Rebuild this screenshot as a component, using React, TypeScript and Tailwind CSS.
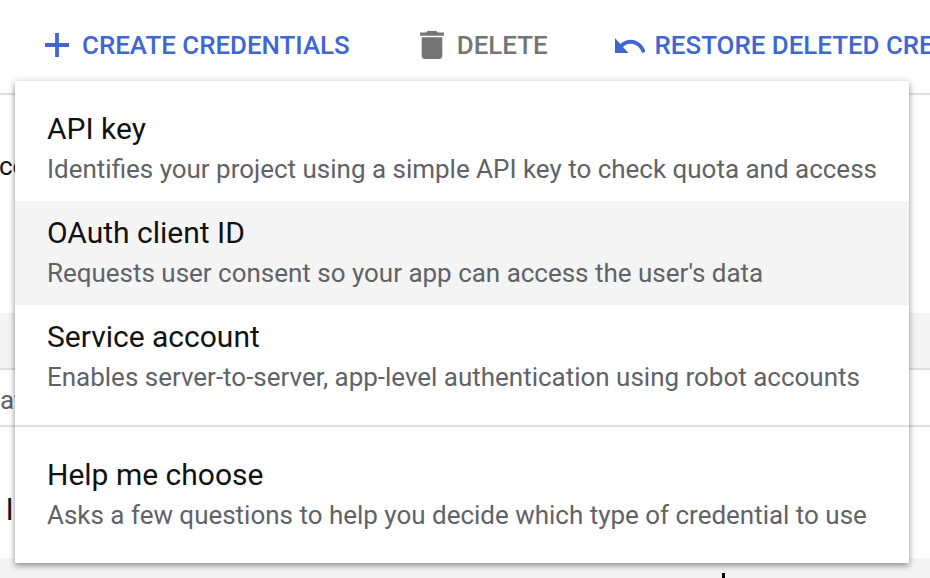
import React from "react";

function Item({ title, sub, active }: { title: string; sub: string; active?: boolean }) {
  return (
    <div className={`h-[104px] pl-[32px] pt-[16px] whitespace-nowrap ${active ? "bg-[#f4f4f4]" : ""}`}>
      <div className="text-[30px] leading-[32px] text-[#111111]">{title}</div>
      <div className="mt-[8px] text-[25.97px] leading-[32px] text-[#5f6368]">{sub}</div>
    </div>
  );
}

export default function App() {
  return (
    <div className="relative w-[930px] h-[578px] overflow-hidden bg-white font-['Roboto',sans-serif]">
      <div className="h-[95px] border-b-[2px] border-[#dfdfdf] flex items-start pt-[27px] pl-[45px] whitespace-nowrap text-[25.9px] leading-[36px] font-medium overflow-hidden">
        <div className="flex items-center text-[#3f67d3]">
          <svg width="24" height="24" viewBox="5 5 14 14" className="mr-[13px]" fill="currentColor">
            <path d="M19 13.100h-5.900V19h-2.200v-5.900H5v-2.200h5.900V5h2.200v5.900H19z" />
          </svg>
          <span>CREATE CREDENTIALS</span>
        </div>
        <div className="flex items-center text-[#757575] ml-[70px]">
          <svg width="24" height="28" viewBox="5 3 14 18" preserveAspectRatio="none" className="mr-[13px]" fill="currentColor">
            <path d="M6 19c0 1.100.9 2 2 2h8c1.100 0 2-.9 2-2V7H6v12zM19 4h-3.500l-1-1h-5l-1 1H5v2h14V4z" />
          </svg>
          <span>DELETE</span>
        </div>
        <div className="flex items-center text-[#3f67d3] ml-[67px]">
          <svg width="30" height="15" viewBox="2 7 20.100 9" preserveAspectRatio="none" className="mr-[10px]" fill="currentColor">
            <path d="M12.500 8c-2.650 0-5.050.99-6.900 2.600L2 7v9h9l-3.620-3.620c1.390-1.160 3.160-1.880 5.120-1.880 3.540 0 6.550 2.310 7.600 5.500l2.370-.78C21.080 11.030 17.150 8 12.500 8z" />
          </svg>
          <span>RESTORE DELETED CREDENTIALS</span>
        </div>
      </div>
      <div className="h-[57px] pt-[56px] text-[26px] leading-[32px] text-[#111111]">
        <span className="block -ml-[1px] -mt-[1px]">cc</span>
      </div>
      <div className="h-[161px]" />
      <div className="h-[57px] bg-[#f4f4f4] border-b-[2px] border-[#dfdfdf]" />
      <div className="h-[57px] border-b-[2px] border-[#dfdfdf] pt-[14px] text-[26px] leading-[32px] text-[#5f6368]">
        <span className="block">at</span>
      </div>
      <div className="h-[131px] pt-[66px] pl-[6px] text-[30px] leading-[34px] text-[#111111]">l</div>
      <div className="h-[20px] bg-[#f4f4f4]" />
      <div className="absolute left-[722px] top-[573px] w-[3px] h-[5px] bg-black" />

      <div className="absolute left-[15px] top-[81px] w-[894px] h-[482px] bg-white pt-[16px] shadow-[0_3px_6px_rgba(0,0,0,0.35),0_0_8px_rgba(0,0,0,0.12)]">
        <Item title="API key" sub="Identifies your project using a simple API key to check quota and access" />
        <Item active title="OAuth client ID" sub="Requests user consent so your app can access the user's data" />
        <Item title="Service account" sub="Enables server-to-server, app-level authentication using robot accounts" />
        <div className="mt-[16px] border-t-[2px] border-[#dfdfdf]" />
        <div className="pt-[16px]">
          <Item title="Help me choose" sub="Asks a few questions to help you decide which type of credential to use" />
        </div>
      </div>
    </div>
  );
}
